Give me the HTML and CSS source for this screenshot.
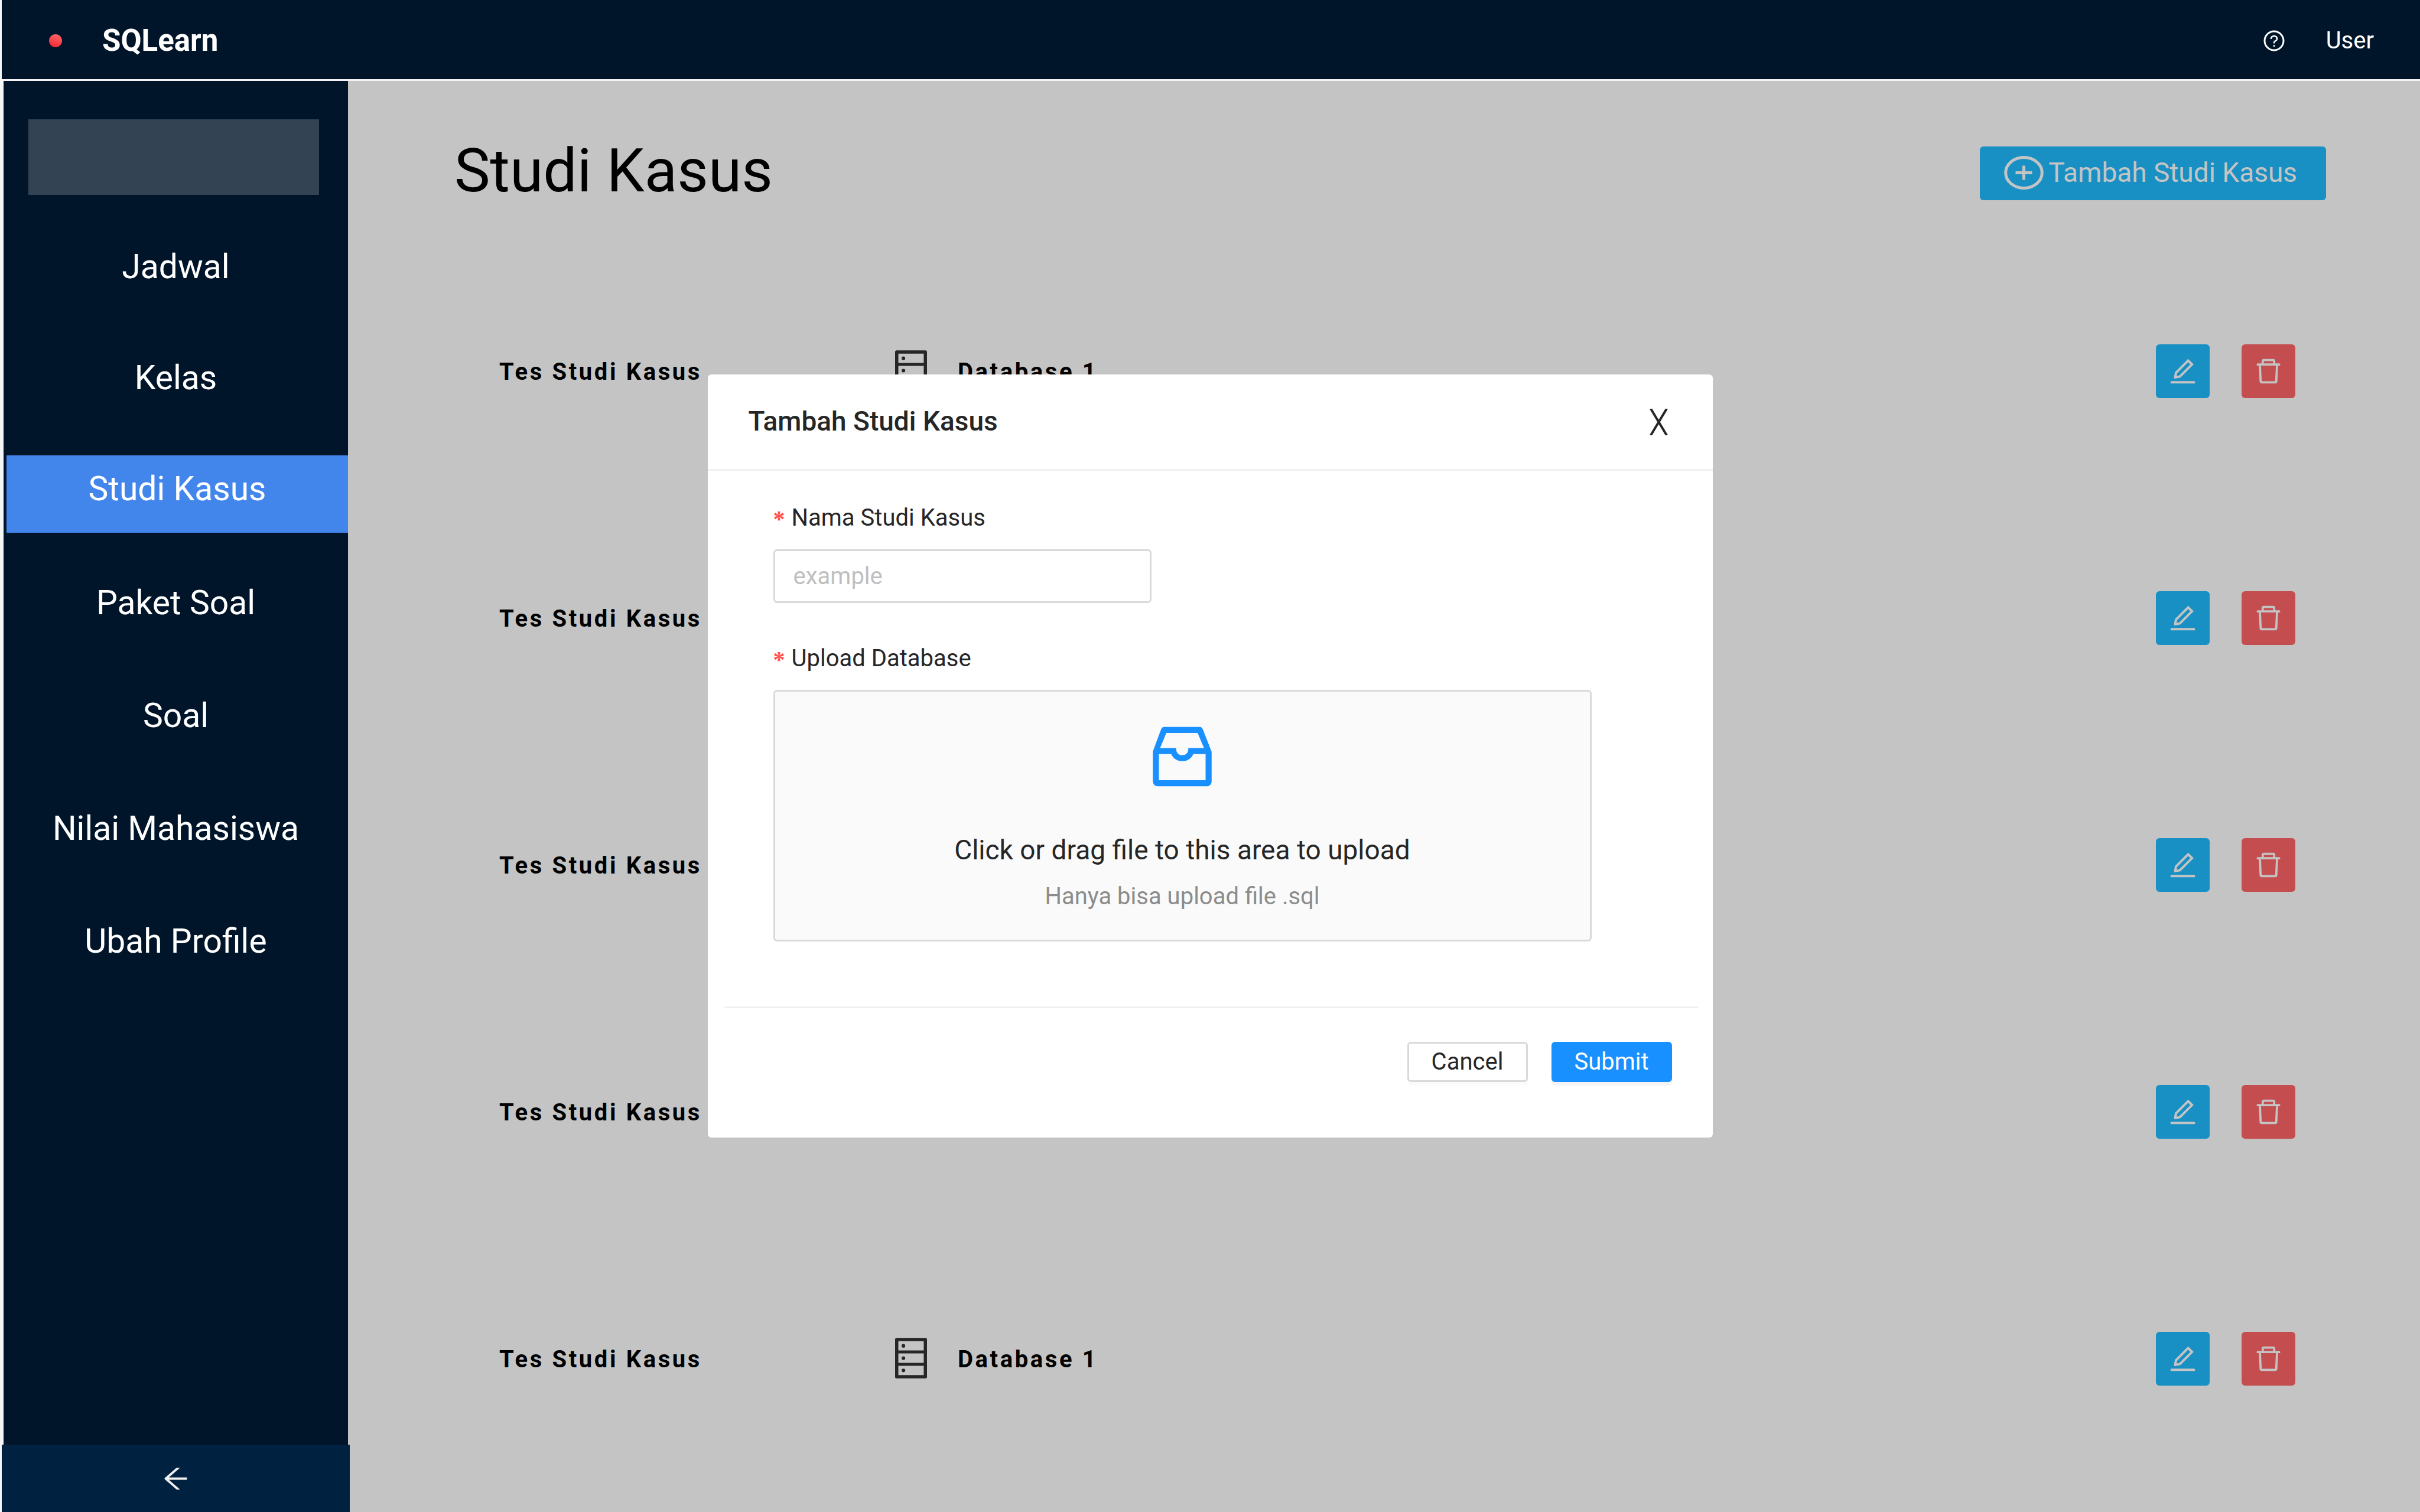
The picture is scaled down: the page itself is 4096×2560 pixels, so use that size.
FILE: index.html
```html
<!DOCTYPE html>
<html lang="id">
<head>
<meta charset="utf-8">
<meta name="viewport" content="width=device-width, initial-scale=1">
<title>SQLearn - Studi Kasus</title>
<link rel="stylesheet" href="styles.css">
</head>
<body>
<svg class="sprite" aria-hidden="true">
  <symbol id="icon-edit" viewBox="0 0 1024 1024"><path d="M257.700 752c2 0 4-.2 6-.5L431.900 722c2-.4 3.900-1.300 5.300-2.800l423.900-423.900a9.960 9.960 0 000-14.100L694.900 114.900c-1.900-1.900-4.400-2.900-7.100-2.900s-5.200 1-7.100 2.900L256.800 538.800c-1.500 1.500-2.400 3.300-2.800 5.300l-29.500 168.200a33.500 33.500 0 009.400 29.800c6.600 6.400 14.900 9.900 23.800 9.900zm67.400-174.400L687.800 215l73.300 73.300-362.700 362.600-88.900 15.700 15.600-89zM880 836H144c-17.700 0-32 14.300-32 32v36c0 4.400 3.600 8 8 8h784c4.400 0 8-3.600 8-8v-36c0-17.700-14.300-32-32-32z"/></symbol>
  <symbol id="icon-delete" viewBox="0 0 1024 1024"><path d="M360 184h-8c4.400 0 8-3.600 8-8v8h304v-8c0 4.400 3.600 8 8 8h-8v72h72v-80c0-35.300-28.700-64-64-64H352c-35.300 0-64 28.700-64 64v80h72v-72zm504 72H160c-17.700 0-32 14.300-32 32v32c0 4.400 3.600 8 8 8h60.400l24.700 523c1.600 34.100 29.800 61 63.900 61h454c34.200 0 62.300-26.800 63.900-61l24.700-523H888c4.400 0 8-3.600 8-8v-32c0-17.700-14.300-32-32-32zM731.300 840H292.700l-24.200-512h487l-24.200 512z"/></symbol>
  <symbol id="icon-database" viewBox="160 64 704 896"><path d="M832 64H192c-17.700 0-32 14.300-32 32v832c0 17.700 14.300 32 32 32h640c17.700 0 32-14.300 32-32V96c0-17.700-14.300-32-32-32zm-600 72h560v208H232V136zm560 480H232V408h560v208zm0 272H232V680h560v208zM304 240a40 40 0 1080 0 40 40 0 10-80 0zm0 272a40 40 0 1080 0 40 40 0 10-80 0zm0 272a40 40 0 1080 0 40 40 0 10-80 0z"/></symbol>
</svg>

<header class="topbar">
  <span class="status-dot"></span>
  <a class="brand" href="#">SQLearn</a>
  <button class="help" type="button" aria-label="Bantuan">
    <svg class="help-icon" viewBox="0 0 1024 1024" aria-hidden="true"><path d="M512 64C264.600 64 64 264.600 64 512s200.600 448 448 448 448-200.600 448-448S759.400 64 512 64zm0 820c-205.400 0-372-166.600-372-372s166.600-372 372-372 372 166.600 372 372-166.600 372-372 372z"/><path d="M623.600 316.700C593.600 290.400 554 276 512 276s-81.600 14.500-111.600 40.700C369.200 344 352 380.700 352 420v7.600c0 4.400 3.600 8 8 8h48c4.400 0 8-3.600 8-8V420c0-44.100 43.100-80 96-80s96 35.900 96 80c0 31.100-22 59.600-56.100 72.700-21.200 8.100-39.200 22.300-52.100 40.900-13.100 19-19.900 41.800-19.900 64.900V620c0 4.400 3.600 8 8 8h48c4.400 0 8-3.600 8-8v-22.700a48.300 48.300 0 0130.900-44.800c59-22.700 97.100-74.700 97.100-132.500.1-39.300-17.100-76-48.300-103.300zM472 732a40 40 0 1080 0 40 40 0 10-80 0z"/></svg>
  </button>
  <a class="user" href="#">User</a>
</header>

<div class="layout">
  <aside class="sidebar">
    <nav class="menu">
      <div class="menu-logo"></div>
      <a class="menu-item" href="#">Jadwal</a>
      <a class="menu-item" href="#">Kelas</a>
      <a class="menu-item active" href="#" aria-current="page">Studi Kasus</a>
      <a class="menu-item" href="#">Paket Soal</a>
      <a class="menu-item" href="#">Soal</a>
      <a class="menu-item" href="#">Nilai Mahasiswa</a>
      <a class="menu-item" href="#">Ubah Profile</a>
    </nav>
    <button class="collapse" type="button" aria-label="Ciutkan menu">
      <svg class="collapse-icon" viewBox="0 0 1024 1024" aria-hidden="true"><path d="M872 474H286.900l350.200-304c5.600-4.900 2.200-14-5.200-14h-88.500c-3.900 0-7.600 1.400-10.500 3.900L155 487.800a31.960 31.960 0 000 48.300L535.100 866c1.500 1.300 3.300 2 5.200 2h91.500c7.400 0 10.800-9.200 5.200-14L286.900 550H872c4.400 0 8-3.600 8-8v-60c0-4.400-3.600-8-8-8z"/></svg>
    </button>
  </aside>

  <main class="content">
    <div class="page-head">
      <h1 class="page-title">Studi Kasus</h1>
      <button class="add-button" type="button">
        <svg class="add-icon" viewBox="0 0 67 57" aria-hidden="true"><ellipse cx="33.500" cy="28.500" rx="30.800" ry="26" /><path d="M19.500 28.500h28M33.500 16.500v24"/></svg>
        Tambah Studi Kasus
      </button>
    </div>
    <table class="cases">
      <tbody>
        <tr>
          <td class="case-name">Tes Studi Kasus</td>
          <td><div class="case-db"><svg class="db-icon" aria-hidden="true"><use href="#icon-database"/></svg>Database 1</div></td>
          <td><div class="case-actions"><button class="action edit" type="button" aria-label="Ubah"><svg class="action-icon" aria-hidden="true"><use href="#icon-edit"/></svg></button><button class="action delete" type="button" aria-label="Hapus"><svg class="action-icon" aria-hidden="true"><use href="#icon-delete"/></svg></button></div></td>
        </tr>
        <tr>
          <td class="case-name">Tes Studi Kasus</td>
          <td></td>
          <td><div class="case-actions"><button class="action edit" type="button" aria-label="Ubah"><svg class="action-icon" aria-hidden="true"><use href="#icon-edit"/></svg></button><button class="action delete" type="button" aria-label="Hapus"><svg class="action-icon" aria-hidden="true"><use href="#icon-delete"/></svg></button></div></td>
        </tr>
        <tr>
          <td class="case-name">Tes Studi Kasus</td>
          <td></td>
          <td><div class="case-actions"><button class="action edit" type="button" aria-label="Ubah"><svg class="action-icon" aria-hidden="true"><use href="#icon-edit"/></svg></button><button class="action delete" type="button" aria-label="Hapus"><svg class="action-icon" aria-hidden="true"><use href="#icon-delete"/></svg></button></div></td>
        </tr>
        <tr>
          <td class="case-name">Tes Studi Kasus</td>
          <td></td>
          <td><div class="case-actions"><button class="action edit" type="button" aria-label="Ubah"><svg class="action-icon" aria-hidden="true"><use href="#icon-edit"/></svg></button><button class="action delete" type="button" aria-label="Hapus"><svg class="action-icon" aria-hidden="true"><use href="#icon-delete"/></svg></button></div></td>
        </tr>
        <tr>
          <td class="case-name">Tes Studi Kasus</td>
          <td><div class="case-db"><svg class="db-icon" aria-hidden="true"><use href="#icon-database"/></svg>Database 1</div></td>
          <td><div class="case-actions"><button class="action edit" type="button" aria-label="Ubah"><svg class="action-icon" aria-hidden="true"><use href="#icon-edit"/></svg></button><button class="action delete" type="button" aria-label="Hapus"><svg class="action-icon" aria-hidden="true"><use href="#icon-delete"/></svg></button></div></td>
        </tr>
      </tbody>
    </table>
  </main>
</div>

<div class="overlay">
  <form class="modal" role="dialog" aria-labelledby="modal-title">
    <div class="modal-head">
      <h2 class="modal-title" id="modal-title">Tambah Studi Kasus</h2>
      <button class="close" type="button" aria-label="Tutup">
        <svg class="close-icon" viewBox="0 0 31 45" aria-hidden="true"><path d="M2 0l27 45M29 0L2 45"/></svg>
      </button>
    </div>
    <div class="modal-body">
      <label class="field-label" for="case-name"><span class="required">*</span>Nama Studi Kasus</label>
      <input class="text-input" id="case-name" type="text" placeholder="example">
      <label class="field-label" for="case-file"><span class="required">*</span>Upload Database</label>
      <label class="dropzone">
        <input class="file-input" id="case-file" type="file" accept=".sql">
        <svg class="inbox-icon" viewBox="0 0 1024 1024" aria-hidden="true"><path d="M885.200 446.300l-.2-.8-112.200-285.100c-5-16.100-19.900-27.200-36.800-27.200H281.200c-17 0-32.100 11.300-36.900 27.600L139.400 443l-.3.7-.2.8c-1.300 4.900-1.700 9.900-1 14.800-.1 1.600-.2 3.200-.2 4.800V830a60.900 60.900 0 0060.800 60.800h627.200c33.500 0 60.800-27.300 60.900-60.800V464.100c0-1.300 0-2.600-.1-3.700.4-4.900 0-9.600-1.300-14.100zm-295.800-43l-.3 15.700c-.8 44.900-31.800 75.100-77.100 75.100-22.100 0-41.100-7.100-54.800-20.600S436 441.200 435.600 419l-.3-15.700H229.500L309 210h399.200l81.700 193.300H589.400zm-375 76.800h157.300c24.300 57.100 76 90.800 140.400 90.800 33.700 0 65-9.400 90.300-27.200 22.200-15.600 39.500-37.400 50.700-63.600h156.500V814H214.400V480.100z"/></svg>
        <span class="drop-title">Click or drag file to this area to upload</span>
        <span class="drop-hint">Hanya bisa upload file .sql</span>
      </label>
    </div>
    <div class="modal-foot">
      <button class="button" type="button">Cancel</button>
      <button class="button primary" type="submit">Submit</button>
    </div>
  </form>
</div>
</body>
</html>
```
FILE: styles.css
```css
* {
  box-sizing: border-box;
}

body {
  margin: 0;
  padding-left: 3px;
  min-height: 100vh;
  display: flex;
  flex-direction: column;
  background: #f4f6f8;
  color: #262626;
  font-family: Roboto, "Liberation Sans", sans-serif;
  font-size: 40px;
  line-height: 48px;
}

a {
  color: inherit;
  text-decoration: none;
}

button {
  margin: 0;
  padding: 0;
  border: 0;
  background: none;
  color: inherit;
  font: inherit;
}

svg {
  display: block;
  flex: none;
  fill: currentColor;
}

.sprite {
  display: none;
}

/* Top bar */
.topbar {
  display: flex;
  align-items: center;
  height: 137px;
  padding: 3px 78px 0 80px;
  border-bottom: 3px solid #f4f2f5;
  background: #001529;
  color: #fff;
}

.status-dot {
  width: 22px;
  height: 22px;
  border-radius: 50%;
  background: linear-gradient(200deg, #ff6b6e, #f5222d);
}

.brand {
  margin-left: 68px;
  font-size: 51px;
  font-weight: 700;
  line-height: 60px;
}

.help {
  margin-left: auto;
}

.help-icon {
  width: 40px;
  height: 40px;
}

.user {
  margin-left: 68px;
}

/* Page frame */
.layout {
  flex: 1;
  display: flex;
}

.sidebar {
  flex: none;
  width: 586px;
  display: flex;
  flex-direction: column;
}

.menu {
  flex: 1;
  margin-left: 3px;
  padding-top: 65px;
  background: #001529;
}

.menu-logo {
  height: 128px;
  margin: 0 49px 65px 42px;
  background: rgba(255, 255, 255, 0.2);
}

.menu-item {
  display: block;
  margin-bottom: 57px;
  padding: 23px 0 41px;
  color: #fff;
  font-size: 57px;
  line-height: 67px;
  text-align: center;
}

.menu-item.active {
  margin-left: 5px;
  margin-bottom: 62px;
  background: #4285eb;
}

.menu-item.active ~ .menu-item {
  margin-bottom: 60px;
}

.collapse {
  position: relative;
  display: flex;
  align-items: center;
  justify-content: center;
  height: 114px;
  margin-right: -3px;
  background: #002140;
  color: #f0f0f0;
}

.collapse-icon {
  width: 53px;
  height: 53px;
}

/* Case list */
.content {
  flex: 1;
  padding: 102px 159px 48px 180px;
  background: #c4c4c4;
}

.page-head {
  display: flex;
  align-items: flex-end;
  justify-content: space-between;
}

.page-title {
  margin: 0;
  color: #000;
  font-size: 102px;
  font-weight: 400;
  line-height: 100px;
}

.add-button {
  display: flex;
  align-items: center;
  gap: 8px;
  height: 91px;
  padding: 0 49px 3px 41px;
  border-radius: 6px;
  background: #1890c4;
  color: #c4c4c4;
  font-size: 46px;
}

.add-icon {
  width: 67px;
  height: 57px;
  fill: none;
  stroke: currentColor;
  stroke-width: 5;
}

.cases {
  width: calc(100% - 128px);
  margin: 80px 52px 0 76px;
  border-collapse: collapse;
  color: #000;
  font-weight: 700;
  letter-spacing: 0.09em;
}

.cases tr {
  height: 418px;
}

.cases td {
  padding: 0;
  vertical-align: middle;
}

.cases .case-name {
  width: 670px;
  padding-top: 4px;
}

.case-db {
  display: flex;
  align-items: center;
  gap: 52px;
  padding-top: 4px;
}

.db-icon {
  width: 54px;
  height: 69px;
  margin-bottom: 6px;
  color: #262626;
}

.case-actions {
  display: flex;
  justify-content: flex-end;
  gap: 54px;
}

.action {
  display: flex;
  align-items: center;
  justify-content: center;
  width: 91px;
  height: 91px;
  border-radius: 6px;
  color: #c4c4c4;
}

.action.edit {
  background: #1890c4;
}

.action.delete {
  background: #c44d4f;
}

.action-icon {
  width: 53px;
  height: 53px;
}

/* Modal */
.overlay {
  position: fixed;
  inset: 0;
  display: flex;
  align-items: center;
  justify-content: center;
}

.modal {
  width: 1701px;
  max-width: 100%;
  border-radius: 6px;
  background: #fff;
}

.modal-head {
  display: flex;
  align-items: center;
  justify-content: space-between;
  height: 163px;
  padding: 0 76px 0 69px;
  border-bottom: 3px solid #f0f0f0;
}

.modal-title {
  margin: 0;
  padding-bottom: 3px;
  font-size: 46px;
  font-weight: 500;
  line-height: 54px;
}

.close-icon {
  width: 31px;
  height: 45px;
  fill: none;
  stroke: currentColor;
  stroke-width: 4;
}

.modal-body {
  display: flex;
  flex-direction: column;
  padding: 56px 205px 110px 111px;
}

.field-label {
  display: flex;
  margin-bottom: 29px;
}

.required {
  width: 31px;
  color: #ff4d4f;
  font-family: "Liberation Serif", serif;
  font-weight: 700;
  line-height: 52px;
}

.text-input {
  width: 640px;
  height: 91px;
  margin: 0 0 70px;
  padding: 0 31px;
  border: 3px solid #d9d9d9;
  border-radius: 6px;
  background: #fff;
  color: inherit;
  font: inherit;
}

.text-input::placeholder {
  color: #bfbfbf;
  opacity: 1;
}

.field-label {
  height: 48px;
}

.dropzone {
  position: relative;
  display: flex;
  flex-direction: column;
  align-items: center;
  padding: 42px 0 49px;
  border: 3px solid #d9d9d9;
  border-radius: 6px;
  background: #fafafa;
}

.file-input {
  position: absolute;
  inset: 0;
  width: 100%;
  height: 100%;
  opacity: 0;
}

.inbox-icon {
  width: 136px;
  height: 136px;
  margin-bottom: 63px;
  color: #1890ff;
}

.drop-title {
  margin-bottom: 28px;
  font-size: 46px;
  line-height: 54px;
}

.drop-hint {
  color: #8c8c8c;
}

.modal-foot {
  display: flex;
  justify-content: flex-end;
  gap: 40px;
  margin: 0 25px 0 28px;
  padding: 57px 44px 94px 0;
  border-top: 3px solid #f0f0f0;
}

.button {
  width: 204px;
  height: 68px;
  border: 3px solid #d9d9d9;
  border-radius: 6px;
  background: #fff;
  box-shadow: 0 6px 0 rgba(0, 0, 0, 0.016);
  line-height: 60px;
}

.button.primary {
  border-color: #1890ff;
  background: #1890ff;
  box-shadow: 0 6px 0 rgba(0, 0, 0, 0.043);
  color: #fff;
}
```
